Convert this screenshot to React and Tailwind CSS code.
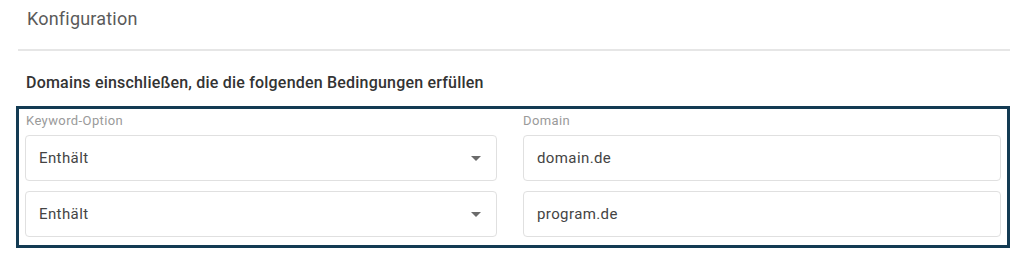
function Caret() {
  return (
    <svg width="10" height="5" viewBox="0 0 10 5" className="shrink-0">
      <path d="M0 0h10L5 5z" fill="#6b6b6b" />
    </svg>
  )
}

function SelectBox({ value }) {
  return (
    <div className="h-[46px] flex items-center justify-between pl-[13px] pr-[15px] rounded-[4px] border border-[#e0e0e0] bg-white">
      <span className="text-[15px] tracking-[0.4px] text-[#444]">{value}</span>
      <Caret />
    </div>
  )
}

function TextBox({ value }) {
  return (
    <div className="h-[46px] flex items-center pl-[13px] rounded-[4px] border border-[#e0e0e0] bg-white">
      <span className="text-[15px] tracking-[0.4px] text-[#444]">{value}</span>
    </div>
  )
}

export default function App() {
  const rows = [
    { option: 'Enthält', domain: 'domain.de' },
    { option: 'Enthält', domain: 'program.de' },
  ]

  return (
    <div className="w-[1024px] h-[261px] bg-white font-['Roboto',sans-serif] overflow-hidden">
      <div className="ml-[18px] w-[992px]">
        <div className="h-[51px] pl-[9px] pt-[7px] border-b-2 border-[#e6e6e6]">
          <h1 className="text-[18px] tracking-[0.2px] font-normal text-[#5a5a5a] leading-[24px]">Konfiguration</h1>
        </div>

        <p className="mt-[23px] pl-[8px] text-[16px] tracking-[0.2px] font-medium text-[#333] leading-[18px]">
          Domains einschließen, die die folgenden Bedingungen erfüllen
        </p>

        {/* Conditions box */}
        <div className="mt-[14px] -ml-[2px] w-[994px] h-[142px] border-[3px] border-[#133b53] pl-[6px] pr-[6px]">
          <div className="grid grid-cols-[472px_478px] gap-x-[26px]">
            <span className="text-[13px] tracking-[0.4px] text-[#9a9a9a] leading-[14px] pt-[5px] pl-[1px]">Keyword-Option</span>
            <span className="text-[13px] tracking-[0.4px] text-[#9a9a9a] leading-[14px] pt-[5px]">Domain</span>
          </div>
          <div className="mt-[7px] flex flex-col gap-[10px]">
            {rows.map((r, i) => (
              <div key={i} className="grid grid-cols-[472px_478px] gap-x-[26px]">
                <SelectBox value={r.option} />
                <TextBox value={r.domain} />
              </div>
            ))}
          </div>
        </div>
      </div>
    </div>
  )
}
